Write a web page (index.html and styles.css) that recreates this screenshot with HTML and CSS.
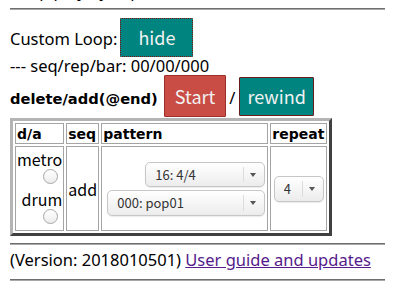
FILE: index.html
```html
<!DOCTYPE html>
<html lang="en">
<head>
    <meta charset="UTF-8">
    <meta name="viewport" content="width=device-width, initial-scale=1.0">
    <title>Sequencer</title>
    <link rel="stylesheet" href="styles.css">
</head>
<body>
    <div class="page">
        <p class="cut">(loop play / jump)</p>
        <hr>
        <div class="row loop-row">
            <span>Custom Loop:</span>
            <button class="btn btn-teal btn-focus" id="hide-btn">hide</button>
        </div>
        <div class="status" id="status">--- seq/rep/bar: 00/00/000</div>
        <div class="row ctrl-row">
            <b class="ctrl-label">delete/add(@end)</b>
            <button class="btn btn-red" id="start-btn">Start</button>
            <span class="slash">/</span>
            <button class="btn btn-teal btn-rewind" id="rewind-btn">rewind</button>
        </div>
        <table class="seq-table">
            <tr>
                <th class="col-da">d/a</th>
                <th class="col-seq">seq</th>
                <th class="col-pat">pattern</th>
                <th class="col-rep">repeat</th>
            </tr>
            <tr>
                <td class="cell-da">
                    <div class="da-label">metro</div>
                    <div class="da-radio"><input type="radio" name="da"></div>
                    <div class="da-label">drum</div>
                    <div class="da-radio"><input type="radio" name="da"></div>
                </td>
                <td class="cell-seq">add</td>
                <td class="cell-pat">
                    <div class="pat-stack">
                        <span class="sel sel-meter"><select><option>16: 4/4</option></select></span>
                        <span class="sel sel-pattern"><select><option>000: pop01</option></select></span>
                    </div>
                </td>
                <td class="cell-rep">
                    <span class="sel sel-rep"><select><option>4</option></select></span>
                </td>
            </tr>
        </table>
        <hr class="hr-foot">
        <p class="footer">(Version: 2018010501) <a href="#">User guide and updates</a></p>
        <hr>
    </div>
</body>
</html>
```

FILE: styles.css
```css
* {
    box-sizing: border-box;
}

body {
    margin: 0;
    padding: 0;
    font-family: 'Noto Sans', 'Noto Sans CJK JP', sans-serif;
    font-size: 16.5px;
    color: #000;
    background: #fff;
    overflow: hidden;
}

.page {
    width: 375px;
    margin: 0 10px;
}

.cut {
    margin: -21px 0 0;
    line-height: 23px;
    height: 23px;
}

hr {
    height: 0;
    margin: 6px 0 0;
    border: none;
    border-top: 1px solid #6e6e6e;
    border-bottom: 1px solid #a8a8a8;
}

.row {
    display: flex;
    align-items: baseline;
}

.loop-row {
    margin-top: 8px;
    gap: 3px;
}

.btn {
    font-family: 'Noto Sans CJK JP', 'Noto Sans', sans-serif;
    font-size: 18px;
    line-height: 25px;
    color: #f2f2f2;
    border: 1px solid #6a1c1c;
    border-radius: 1px;
    padding: 6px 17px;
    cursor: pointer;
}

.btn-teal {
    background-color: #00847f;
}

.btn-focus {
    border-style: dotted;
    border-color: #7a1010;
}

.btn-red {
    background-color: #c94c45;
    border-color: #9c2f2a;
    padding: 8px 10px 7px;
    margin-left: 6px;
}

.btn-rewind {
    padding: 6px 7px;
}

.status {
    line-height: 18px;
    height: 18px;
}

.ctrl-label {
    font-family: 'DejaVu Sans', sans-serif;
    font-size: 14.7px;
    font-weight: bold;
}

.slash {
    margin: 0 4px 0 3px;
}

.seq-table {
    margin-top: 1px;
    border: 3px solid;
    border-color: #b4b4b4 #404040 #404040 #b4b4b4;
    border-spacing: 2px;
}

.seq-table th,
.seq-table td {
    border: 1px solid #a4a4a4;
    padding: 1px;
}

.seq-table th {
    height: 21px;
    text-align: left;
    font-family: 'DejaVu Sans', sans-serif;
    font-size: 14px;
    line-height: 16px;
    vertical-align: middle;
}

.col-da { width: 49px; }
.col-seq { width: 33px; }
.col-pat { width: 167px; }
.col-rep { width: 57px; }

.seq-table td {
    height: 85px;
    vertical-align: middle;
    font-family: 'Noto Sans CJK JP', 'Noto Sans', sans-serif;
    font-size: 16px;
}

.cell-da {
    text-align: right;
}

.da-label {
    line-height: 20px;
    height: 20px;
}

.da-radio {
    height: 20px;
}

.da-radio input {
    appearance: none;
    width: 15px;
    height: 15px;
    margin: 0 4px 0 0;
    border: 1px solid #a6a6a6;
    border-radius: 50%;
    background: linear-gradient(#ffffff, #ececec);
    vertical-align: top;
}

.cell-seq {
    text-align: left;
}

.pat-stack {
    display: flex;
    flex-direction: column;
    align-items: flex-end;
    gap: 3px;
    margin-right: 1px;
}

.cell-rep {
    text-align: center;
}

.sel {
    position: relative;
    display: inline-block;
}

.sel select {
    appearance: none;
    display: block;
    height: 26px;
    padding: 0 24px 0 9px;
    font-family: 'Noto Sans CJK JP', 'Noto Sans', sans-serif;
    font-size: 13px;
    color: #333;
    border: 1px solid #c6c6c6;
    border-radius: 5px;
    background: linear-gradient(#ffffff, #ececec);
    box-shadow: 0 1px 1px rgba(0, 0, 0, 0.08);
}

.sel::before {
    content: '';
    position: absolute;
    right: 21px;
    top: 5px;
    bottom: 5px;
    width: 1px;
    background: #dcdcdc;
}

.sel::after {
    content: '';
    position: absolute;
    right: 9px;
    top: 11px;
    border-left: 3px solid transparent;
    border-right: 3px solid transparent;
    border-top: 4px solid #555;
}

.sel-meter select {
    width: 120px;
    height: 25px;
}

.sel-pattern select {
    width: 158px;
}

.sel-rep select {
    width: 50px;
}

.hr-foot {
    margin-top: 7px;
}

.footer {
    margin: 3px 0 8px;
    line-height: 23px;
}

.footer a {
    color: #551a8b;
}
```
